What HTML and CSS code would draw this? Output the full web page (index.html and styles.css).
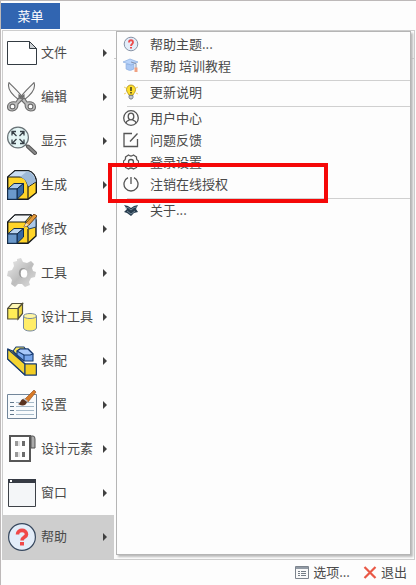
FILE: index.html
```html
<!DOCTYPE html>
<html lang="zh-CN">

<head>
  <meta charset="UTF-8">
  <meta name="viewport" content="width=device-width, initial-scale=1.0">
  <title>菜单</title>
  <link rel="stylesheet" href="styles.css">
</head>

<body>
  <div class="app">
    <header class="tabs">
      <button class="tab">菜单</button>
    </header>

    <main class="panel">
      <nav class="menu">
        <button class="menu-item">
          <svg class="icon" viewBox="0 0 30 30">
            <path d="M.5 3.500h22l7 7v16H.5z" fill="#fff" stroke="#333b42" />
            <path d="M22.500 3.500v7h7z" fill="#ccd0d4" stroke="#333b42" />
          </svg>
          <span class="label">文件</span>
        </button>
        <button class="menu-item">
          <svg class="icon" viewBox="0 0 30 30">
            <g stroke="#6c6c6c" stroke-width="1.1">
              <path d="M2 .6C0 6 4 12 12 18l4-2C12 10 6 5 2 .6z" fill="#f8f8f8" />
              <path d="M27 .6c2 5.400-2 11.400-10 17.400l-4-2C17 10 23 5 27 .6z" fill="#f8f8f8" />
              <path d="M12 13l6 4 2 3c5-1 8.500 1 8.500 5 0 3-2.500 4-5 4-4-.5-5.500-4-5.500-7l-6-6z" fill="#bebebe" />
              <path d="M17 13l-6 4-2 3c-5-1-8.500 1-8.500 5 0 3 2.500 4 5 4 4-.5 5.500-4 5.500-7l6-6z" fill="#bebebe" />
              <circle cx="5.500" cy="24.500" r="2.400" fill="#fff" />
              <circle cx="23.500" cy="24.500" r="2.400" fill="#fff" />
              <circle cx="14.500" cy="15.500" r="1.200" fill="#777" />
            </g>
          </svg>
          <span class="label">编辑</span>
        </button>
        <button class="menu-item">
          <svg class="icon" viewBox="0 0 30 30">
            <path d="M18 18l3 3" stroke="#777" stroke-width="2" />
            <path d="M21 20.500l7 6.500" stroke="#555" stroke-width="4" stroke-linecap="round" />
            <path d="M21 20.500l7 6.500" stroke="#888" stroke-width="2" stroke-linecap="round" />
            <circle cx="11" cy="11.500" r="10.400" fill="#e5f6f6" stroke="#687276" stroke-width="1.200" />
            <path d="M5.500 6l4 4m7-4l-4 4m-7 7l4-4m7 4l-4-4M5 9.500v-4h4m4 0h4v4m0 4v4h-4m-4 0H5v-4" fill="none"
              stroke="#374047" stroke-width="1.300" />
          </svg>
          <span class="label">显示</span>
        </button>
        <button class="menu-item">
          <svg class="icon" viewBox="0 0 30 30">
            <path d="M.7 7L8 .7h13c5 1 8 6 8.300 11v11L21 29.300H.7z" fill="#ffd428" stroke="#15191d" stroke-width="1.400" />
            <path d="M.7 7L8 .7h13c5 1 8 6 8.300 11L21 17C20 11 17 7 12 7z" fill="#c9ddf3" stroke="#15191d" />
            <path d="M13 7L20 1.200c5 1 8 5.500 8.700 10.300L21 16.500c-1-5-4-8.500-8-9.500z" fill="#9db9d8" />
            <path d="M21 17v12" stroke="#15191d" stroke-width="1.200" />
            <g stroke="#102b4c">
              <path d="M.7 19L7 13.500h9.500L10 19z" fill="#a9c8ec" />
              <path d="M16.500 13.500V23L10 29.300V19z" fill="#3769a3" />
              <path d="M.7 19H10v10.300H.7z" fill="#6b99cb" />
            </g>
          </svg>
          <span class="label">生成</span>
        </button>
        <button class="menu-item">
          <svg class="icon" viewBox="0 0 30 30">
            <path d="M.7 8L8 1h16l5 5v16l-8 7.300H.7z" fill="#ffd428" stroke="#15191d" stroke-width="1.400" />
            <path d="M.7 8L8 1h16l-6 7z" fill="#f5f7f8" stroke="#15191d" />
            <path d="M18 8h5l6-5v10l-7 2z" fill="#a9c7e8" stroke="#23415f" />
            <path d="M21 15v14" stroke="#15191d" stroke-width="1.200" />
            <path d="M17 13l2-4 8-9 3 2-8 9z" fill="#e49a38" stroke="#70441d" />
            <path d="M17 13l2-4 3 2z" fill="#f5dfb9" />
            <g stroke="#102b4c">
              <path d="M.7 20L7 14.500h9.500L10 20z" fill="#b9d4ef" />
              <path d="M16.500 14.500V23L10 29.300V20z" fill="#3769a3" />
              <path d="M.7 20H10v9.300H.7z" fill="#6b99cb" />
            </g>
          </svg>
          <span class="label">修改</span>
        </button>
        <button class="menu-item">
          <svg class="icon" viewBox="0 0 30 30">
            <defs>
              <linearGradient id="metal" x2="1" y2="1">
                <stop stop-color="#eee" />
                <stop offset=".55" stop-color="#bdbdbd" />
                <stop offset="1" stop-color="#dedede" />
              </linearGradient>
            </defs>
            <path d="M10 1l4-1 2 4 4 1 4-2 3 3-2 4 1 3 3 1-1 5-4 1-2 4 1 3-5 2-3-3h-4l-3 3-4-3 1-4-2-3-3-1 1-5 4-1 2-4-1-4 4-1z"
              fill="url(#metal)" />
            <ellipse cx="16" cy="15" rx="4.200" ry="5" fill="#999" />
            <ellipse cx="17" cy="15.500" rx="3.300" ry="4.200" fill="#fff" />
          </svg>
          <span class="label">工具</span>
        </button>
        <button class="menu-item">
          <svg class="icon" viewBox="0 0 30 30">
            <g stroke="#53503a" stroke-width="1.200">
              <path d="M.7 6.500L5 1.500h10.500L11 6.500z" fill="#fff8b5" />
              <path d="M15.500 1.500v10L11 17V6.500z" fill="#eed640" />
              <path d="M.7 6.500H11V17H.7z" fill="#ffed57" />
            </g>
            <path d="M16.500 14v12c1 4 12 4 13 0V14" fill="#ffed68" stroke="#7688a0" />
            <ellipse cx="23" cy="14" rx="6.500" ry="2.500" fill="#fff6a3" stroke="#7688a0" />
          </svg>
          <span class="label">设计工具</span>
        </button>
        <button class="menu-item">
          <svg class="icon" viewBox="0 0 30 30">
            <g stroke="#173a70" stroke-width="1.100" stroke-linejoin="round">
              <path d="M.7 3l5 2L18 18h11.300v11H18L.7 13z" fill="#e3b617" />
              <path d="M.7 3L18 18v11L.7 13z" fill="#f4d431" />
              <path d="M6 5l3-4h8l2 3-5 3-5 1z" fill="#ffe95c" />
              <path d="M10 5l3-2h8l5 5v7h-9l-7-6z" fill="#77a5eb" />
              <path d="M10 5l3-2h8l5 5-3 1h-6z" fill="#a8c8fa" />
              <path d="M17 9v6" />
              <path d="M18 18h11.300v11H18z" fill="#f2cd24" />
            </g>
          </svg>
          <span class="label">装配</span>
        </button>
        <button class="menu-item">
          <svg class="icon" viewBox="0 0 30 30">
            <path d="M.5 4.500h29v24H.5z" fill="#f8fbfd" stroke="#72869a" />
            <path d="M3 12.500h4m-4 4h4m-4 4h4m-4 4h4" stroke="#61788c" />
            <path d="M9 12.500h18m-18 4h18m-18 4h18m-18 4h18" stroke="#a6bac9" />
            <path d="M18 9L27 0l2 2-8 10z" fill="#d77a27" stroke="#8c481b" stroke-width=".6" />
            <path d="M17 8l4 3-2 2-4-3z" fill="#b9bcc0" />
            <path d="M11 14c3-1 2-4 5-5l4 3c-1 4-5 4-8 2.500z" fill="#59331f" />
          </svg>
          <span class="label">设置</span>
        </button>
        <button class="menu-item">
          <svg class="icon" viewBox="0 0 30 30">
            <path d="M3 2h20v25H3z" fill="#fff" stroke="#575757" stroke-width="2" />
            <path d="M24 2h2q2 0 2 3v9h-4z" fill="#aaa" stroke="#555" />
            <path d="M9.500 7v5m0 6v5" stroke="#999" stroke-width="3" />
            <path d="M12 7v5m0 6v5" stroke="#ccc" stroke-width="1" />
            <path d="M16.500 7v5m0 6v5" stroke="#6c6c6c" stroke-width="3" />
          </svg>
          <span class="label">设计元素</span>
        </button>
        <button class="menu-item">
          <svg class="icon" viewBox="0 0 30 30">
            <path d="M1.500 1.500h27v27h-27z" fill="#f4f6f8" stroke="#3d4147" />
            <path d="M1 1h28v4H1z" fill="#363b44" />
            <path d="M3 2h2v2H3z" fill="#fff" />
          </svg>
          <span class="label">窗口</span>
        </button>
        <button class="menu-item active">
          <svg class="icon" viewBox="0 0 30 30">
            <circle cx="15" cy="15" r="13.400" fill="#e3edf9" stroke="#36475d" stroke-width="1.200" />
            <path d="M10.500 12.500c0-5.500 9-5.500 9 0 0 2.500-4.500 2.500-4.500 6" fill="none" stroke="#f04848" stroke-width="3.600" />
            <path d="M13 20h4v3.500h-4z" fill="#f04848" />
          </svg>
          <span class="label">帮助</span>
        </button>
      </nav>

      <div class="content">
        <div class="submenu">
          <button class="sub-item">
            <svg class="icon-small" viewBox="0 0 16 16">
              <circle cx="8" cy="8" r="6.800" fill="#e3edf9" stroke="#8792a5" />
              <path d="M6 6.500c0-3 4-3 4 0C10 8 8 8 8 10" fill="none" stroke="#ed4c4c" stroke-width="1.800" />
              <path d="M7 11h2v1.500H7z" fill="#ed4c4c" />
            </svg>
            帮助主题...
          </button>
          <button class="sub-item">
            <svg class="icon-small" viewBox="0 0 16 16">
              <path d="M3 6v5q4 3 8 0V6z" fill="#a9c7f3" stroke="#8daddd" stroke-width=".6" />
              <path d="M0 4l7-3 8 3-7 3z" fill="#b9d4fb" stroke="#88aadc" stroke-width=".7" />
              <path d="M8 4l5 1.500V10" fill="none" stroke="#8593ad" />
              <path d="M11.500 9.500h3V14h-3z" fill="#f0a182" />
            </svg>
            帮助 培训教程
          </button>
          <hr class="line">
          <button class="sub-item">
            <svg class="icon-small" viewBox="0 0 16 16">
              <path d="M1 3l2 1m12-1l-2 1M1 10l2-1m12 1l-2-1" stroke="#f2d36e" />
              <path d="M6 11C5 9 3.500 8 3.500 5.500a4.500 4.500 0 0 1 9 0C12.500 8 11 9 10 11z" fill="#ffdf2b" stroke="#a68a22" stroke-width=".8" />
              <path d="M8 3v4m0 1v1.500" stroke="#3b371d" stroke-width="1.500" />
              <path d="M6 11.500h4v2L9 15H7l-1-1.500z" fill="#c3c8cf" stroke="#666e78" stroke-width=".8" />
            </svg>
            更新说明
          </button>
          <hr class="line">
          <button class="sub-item">
            <svg class="icon-small outline" viewBox="0 0 16 16">
              <circle cx="8" cy="8" r="7.300" />
              <ellipse cx="8" cy="6.500" rx="2.800" ry="3.300" />
              <path d="M3 13c0-2 2-2.500 3.500-3m3 0c1.500.5 3.500 1 3.500 3" />
            </svg>
            用户中心
          </button>
          <button class="sub-item">
            <svg class="icon-small outline" viewBox="0 0 16 16">
              <path d="M9 1.500H1v13h13.500V7M7 9.500L14.500 1.500" />
            </svg>
            问题反馈
          </button>
          <button class="sub-item">
            <svg class="icon-small outline" viewBox="0 0 16 16">
              <path d="M5.500 1q2.500 2 5 0l3 2q-.5 3 2 4v3q-2.500 1-2 3.500l-3 1.500q-2.500-2-5 0l-3-1.500Q3 11 .5 10V7q2.500-1 2-4z" />
              <circle cx="8" cy="8" r="2.500" />
            </svg>
            登录设置
          </button>
          <button class="sub-item marked">
            <svg class="icon-small outline" viewBox="0 0 16 16">
              <path d="M5 1.700a7 7 0 1 0 6 0M8 1v7" />
            </svg>
            注销在线授权
          </button>
          <hr class="line">
          <button class="sub-item">
            <svg class="icon-small" viewBox="0 0 16 16">
              <path d="M1 3l4 1 3 2 3-2 4-1-2 4 2 3-4 1-3 3-4-3-3-1 3-3z" fill="#263c4e" />
              <path d="M2 6l3-.5L8 8l3-2.500 3-.5M4 9l4 3 4-3" fill="none" stroke="#91a6b4" stroke-width=".7" />
            </svg>
            关于...
          </button>
        </div>
      </div>
    </main>

    <footer class="footer">
      <button class="action">
        <svg class="icon-action" viewBox="0 0 14 14">
          <path d="M.5 1.500h13v12H.5z" fill="#fafafa" stroke="#7d858e" />
          <path d="M1 2h12v2H1z" fill="#929ba5" />
          <path d="M3 6.500h2m-2 2h2m-2 2h2M6 6.500h5m-5 2h5m-5 2h5" stroke="#747d86" />
        </svg>
        选项...
      </button>
      <button class="action">
        <svg class="icon-action" viewBox="0 0 14 14">
          <path d="M1.500 2l11 11M12.500 2l-11 11" stroke="#e95846" stroke-width="2.200" />
        </svg>
        退出
      </button>
    </footer>
  </div>
</body>

</html>
```
FILE: styles.css
```css
*,
*::before,
*::after {
  margin: 0;
  padding: 0;
  box-sizing: border-box;
}

body {
  background: #fdfdfd;
  color: #4a4a4a;
  font-family: "Noto Sans CJK SC", sans-serif;
  font-size: 13px;
  line-height: 20px;
}

button {
  border: 0;
  background: none;
  color: inherit;
  font: inherit;
  text-align: left;
}

svg {
  flex: none;
}

.app {
  display: flex;
  flex-direction: column;
  min-height: 100vh;
  border-top: 1px solid #bdb9b9;
  border-left: 1px solid #bdb9b9;
}

.tabs {
  padding-top: 2px;
  height: 29px;
}

.tab {
  width: 59px;
  height: 26px;
  background: #3165b1;
  color: #fff;
  text-align: center;
}

.panel {
  display: flex;
  margin: 0 1px;
  border: 1px solid #cdcdcd;
}

.menu {
  flex: none;
  width: 111px;
}

.menu-item {
  display: flex;
  align-items: center;
  gap: 4px;
  width: 100%;
  height: 44px;
  padding: 0 7px 0 4px;
}

.menu-item::after {
  content: '';
  border-left: 4px solid #404040;
  border-top: 4px solid transparent;
  border-bottom: 4px solid transparent;
}

.menu-item.active {
  background: #cecece;
}

.icon {
  width: 30px;
  height: 30px;
}

.label {
  flex: 1;
  padding-bottom: 2px;
  white-space: nowrap;
}

.content {
  display: flex;
  flex: 1;
  padding: 0 3px 4px 2px;
  background: linear-gradient(#cdcdcd, #cdcdcd) 0 27px / 100% 1px no-repeat;
}

.submenu {
  flex: 1;
  padding-top: 1px;
  background: #fdfdfd;
  border: 1px solid #b5b5b5;
  box-shadow: 2px 2px 2px #bbb;
}

.sub-item {
  display: flex;
  align-items: center;
  gap: 11px;
  width: 100%;
  height: 22px;
  padding-left: 6px;
}

.icon-small {
  width: 16px;
  height: 16px;
}

.outline {
  fill: none;
  stroke: #555;
  stroke-width: 1.3;
}

.line {
  margin: 3px 0 0 10px;
  border: 0;
  border-top: 1px solid #d0d0d0;
}

.marked {
  position: relative;
}

.marked::after {
  content: '';
  position: absolute;
  top: -10px;
  left: -9px;
  width: 220px;
  height: 40px;
  border: 4px solid #f50808;
}

.footer {
  display: flex;
  justify-content: flex-end;
  gap: 13px;
  padding: 2px 9px 0 0;
}

.action {
  display: flex;
  align-items: center;
  gap: 4px;
}

.icon-action {
  width: 14px;
  height: 14px;
}
```
